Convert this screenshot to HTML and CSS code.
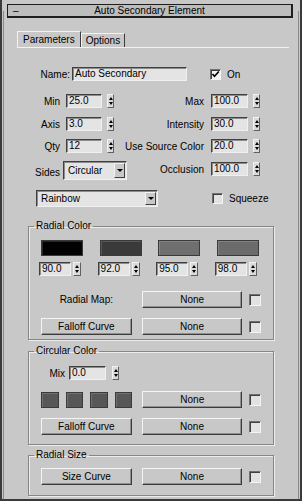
FILE: index.html
```html
<!DOCTYPE html>
<html>
<head>
    <link rel="stylesheet" href="styles.css">
</head>
<body>
    <div class="rollout">
        <div class="frame">
            <div class="title"><span class="collapse">&ndash;</span><span class="title-text">Auto Secondary Element</span><span></span></div>

            <div class="tabs">
                <div class="tab active">Parameters</div>
                <div class="tab">Options</div>
            </div>

            <div class="row name-row">
                <span class="name-label">Name:</span>
                <span class="field name-field">Auto Secondary</span>
                <span class="check on-check"><svg width="9" height="9" viewBox="0 0 9 9"><path d="M1.5 4 L3.5 6.3 L7.8 1.5" fill="none" stroke="#000" stroke-width="1.6"/></svg></span>
                <span class="check-label">On</span>
            </div>

            <div class="row pair min-row">
                <div class="grp-l"><span class="lbl-l">Min</span><span class="field num">25.0</span><span class="spin"></span></div>
                <div class="grp-r"><span class="lbl-r">Max</span><span class="field num wide">100.0</span><span class="spin"></span></div>
            </div>
            <div class="row pair axis-row">
                <div class="grp-l"><span class="lbl-l">Axis</span><span class="field num">3.0</span><span class="spin"></span></div>
                <div class="grp-r"><span class="lbl-r">Intensity</span><span class="field num wide">30.0</span><span class="spin"></span></div>
            </div>
            <div class="row pair qty-row">
                <div class="grp-l"><span class="lbl-l">Qty</span><span class="field num">12</span><span class="spin"></span></div>
                <div class="grp-r"><span class="lbl-r">Use Source Color</span><span class="field num wide">20.0</span><span class="spin"></span></div>
            </div>
            <div class="row pair sides-row">
                <div class="grp-l"><span class="lbl-l">Sides</span><span class="drop sides-drop"><span class="drop-text">Circular</span><span class="drop-btn"></span></span></div>
                <div class="grp-r"><span class="lbl-r">Occlusion</span><span class="field num wide">100.0</span><span class="spin"></span></div>
            </div>
            <div class="row rainbow-row">
                <span class="drop rainbow-drop"><span class="drop-text">Rainbow</span><span class="drop-btn"></span></span>
                <span class="check squeeze-check"></span>
                <span class="check-label">Squeeze</span>
            </div>

            <fieldset class="group radial-color">
                <legend>Radial Color</legend>
                <div class="group-body">
                    <div class="swatches4">
                        <span class="swatch" style="background:#020202"></span>
                        <span class="swatch" style="background:#3a3a3a"></span>
                        <span class="swatch" style="background:#6f6f6f"></span>
                        <span class="swatch" style="background:#6b6b6b"></span>
                    </div>
                    <div class="swatches4 spins4">
                        <span class="cell"><span class="field small">90.0</span><span class="spin"></span></span>
                        <span class="cell"><span class="field small">92.0</span><span class="spin"></span></span>
                        <span class="cell"><span class="field small">95.0</span><span class="spin"></span></span>
                        <span class="cell"><span class="field small">98.0</span><span class="spin"></span></span>
                    </div>
                    <div class="row map-row">
                        <span class="map-label">Radial Map:</span>
                        <span class="btn none-btn">None</span>
                        <span class="check map-check"></span>
                    </div>
                    <div class="row curve-row">
                        <span class="btn curve-btn">Falloff Curve</span>
                        <span class="btn none-btn">None</span>
                        <span class="check map-check"></span>
                    </div>
                </div>
            </fieldset>

            <fieldset class="group circular-color">
                <legend>Circular Color</legend>
                <div class="group-body">
                    <div class="row mix-row">
                        <span class="mix-label">Mix</span>
                        <span class="field num wide">0.0</span>
                        <span class="spin"></span>
                    </div>
                    <div class="row circ-row">
                        <span class="swatch mini"></span>
                        <span class="swatch mini"></span>
                        <span class="swatch mini"></span>
                        <span class="swatch mini"></span>
                        <span class="btn none-btn">None</span>
                        <span class="check map-check"></span>
                    </div>
                    <div class="row curve-row">
                        <span class="btn curve-btn">Falloff Curve</span>
                        <span class="btn none-btn">None</span>
                        <span class="check map-check"></span>
                    </div>
                </div>
            </fieldset>

            <fieldset class="group radial-size">
                <legend>Radial Size</legend>
                <div class="group-body">
                    <div class="row size-row">
                        <span class="btn curve-btn">Size Curve</span>
                        <span class="btn none-btn">None</span>
                        <span class="check map-check"></span>
                    </div>
                </div>
            </fieldset>
        </div>
    </div>
</body>
</html>
```

FILE: styles.css
```css
* { box-sizing: border-box; }
body { margin: 0; background-color: #c8c8c8; color: #000; font-family: "Liberation Sans", Arial, sans-serif; font-size: 10px; }

.rollout { height: 501px; display: flex; flex-direction: column; padding-top: 11px; border-left: 2px solid #3a3a3a; border-right: 2px solid #3a3a3a; border-bottom: 2px solid #3a3a3a; }
.frame { flex: 1; margin: 0 1px; border-left: 1px solid #8a8a8a; border-right: 1px solid #8a8a8a; }

.title { display: grid; grid-template-columns: 20px 1fr 20px; align-items: center; height: 14px; margin: -7px 5px 0 3px; background-color: #bdbdbd; border: 1px solid #1e1e1e; border-right-width: 2px; border-bottom-width: 2px; line-height: 11px; }
.collapse { padding-left: 5px; }
.title-text { text-align: center; }

.tabs { display: flex; align-items: flex-end; height: 17px; margin: 13px 9px 0 13px; border-bottom: 1px solid #f2f2f2; }
.tab { height: 14px; padding: 0 4px; line-height: 13px; border-top: 1px solid #f2f2f2; border-left: 1px solid #f2f2f2; border-right: 1px solid #3c3c3c; }
.tab.active { height: 16px; padding: 0 5px; line-height: 15px; }

.row { display: flex; align-items: center; }

.field { display: inline-block; height: 14px; padding-left: 2px; line-height: 12px; background-color: #e4e4e4; border: 1px solid; border-color: #404040 #f0f0f0 #f0f0f0 #404040; box-shadow: inset 1px 1px 0 #8c8c8c; white-space: nowrap; overflow: hidden; }

.check { display: inline-flex; align-items: center; justify-content: center; width: 11px; height: 11px; background-color: #e2e2e2; border: 1px solid; border-color: #707070 #f4f4f4 #f4f4f4 #707070; box-shadow: inset 1px 1px 0 #404040; }
.on-check { background-color: #f4f4f4; }
.check-label { margin-left: 6px; }

/* spinner: two small arrows */
.spin { display: inline-flex; flex-direction: column; justify-content: center; align-items: center; gap: 2px; width: 7px; height: 14px; margin-left: 5px; background-color: #dadada; border: 1px solid; border-color: #f2f2f2 #606060 #606060 #f2f2f2; }
.spin::before { content: ""; border-left: 2.5px solid transparent; border-right: 2.5px solid transparent; border-bottom: 3px solid #000; }
.spin::after { content: ""; border-left: 2.5px solid transparent; border-right: 2.5px solid transparent; border-top: 3px solid #000; }

.name-row { height: 14px; margin-top: 19px; }
.name-label { width: 66px; margin-right: 2px; text-align: right; }
.name-field { width: 115px; }
.on-check { margin-left: 23px; }

.pair { height: 14px; }
.grp-l { display: flex; align-items: center; }
.grp-r { display: flex; align-items: center; margin-left: auto; margin-right: 38px; }
.lbl-l { width: 56px; margin-right: 6px; text-align: right; }
.lbl-r { margin-right: 7px; text-align: right; }
.num { width: 36px; }
.num.wide { width: 37px; }

.min-row { margin-top: 13px; }
.axis-row { margin-top: 9px; }
.qty-row { margin-top: 8px; }
.sides-row { height: 19px; margin-top: 8px; align-items: flex-start; }
.sides-row .grp-r { margin-top: 1px; }
.sides-row .lbl-l { margin-top: 3px; }

.drop { display: flex; align-items: center; height: 19px; padding: 1px; background-color: #e4e4e4; border: 1px solid; border-color: #404040 #f0f0f0 #f0f0f0 #404040; box-shadow: inset 1px 1px 0 #8c8c8c; }
.drop-text { flex: 1; padding-left: 3px; }
.drop-btn { display: flex; align-items: center; justify-content: center; width: 11px; height: 15px; background-color: #c8c8c8; border: 1px solid; border-color: #f2f2f2 #404040 #404040 #f2f2f2; }
.drop-btn::after { content: ""; border-left: 3px solid transparent; border-right: 3px solid transparent; border-top: 3px solid #000; }
.sides-drop { width: 64px; margin-left: -3px; }

.rainbow-row { height: 17px; margin-top: 10px; }
.rainbow-drop { width: 122px; height: 17px; margin-left: 32px; }
.rainbow-drop .drop-btn { height: 13px; }
.squeeze-check { margin-left: 54px; }

.group { margin: 0 24px; padding: 0; min-width: 0; border: 1px solid #868686; box-shadow: inset 1px 1px 0 #ececec, 1px 1px 0 #ececec; }
.group legend { margin-left: 5px; padding: 0 2px; line-height: 12px; }
.group-body { padding: 0 12px; }

.radial-color { margin-top: 13px; }
.radial-color .group-body { padding-bottom: 4px; }
.circular-color { margin-top: 5px; }
.circular-color .group-body { padding-bottom: 9px; }
.radial-size { margin-top: 4px; }
.radial-size .group-body { padding-bottom: 10px; }

.swatches4 { display: grid; grid-template-columns: repeat(4, 42px); column-gap: 16.6px; margin-top: 8px; }
.swatch { display: block; height: 16px; border: 1px solid #3a3a3a; box-shadow: inset 1px 1px 0 rgba(255,255,255,0.15); }
.spins4 { margin-top: 6px; }
.cell { display: flex; align-items: center; margin-left: -2px; }
.field.small { width: 32px; }
.cell .spin { width: 8px; margin-left: 2px; }

.btn { display: inline-block; height: 17px; line-height: 15px; text-align: center; background-color: #c8c8c8; border: 1px solid; border-color: #f4f4f4 #3c3c3c #3c3c3c #f4f4f4; box-shadow: inset -1px -1px 0 #909090; }
.curve-btn { width: 93px; }
.none-btn { width: 103px; margin-left: 10px; }
.map-check { width: 12px; height: 12px; margin-left: 7px; }

.map-row { height: 17px; margin-top: 15px; }
.map-label { width: 93px; padding-right: 19px; text-align: right; }
.curve-row { height: 17px; margin-top: 10px; }

.mix-row { height: 14px; margin-top: 9px; }
.mix-label { width: 24px; margin-right: 4px; text-align: right; }
.mix-row .spin { margin-left: 6px; }

.circ-row { height: 17px; margin-top: 11px; }
.swatch.mini { width: 18px; margin-right: 7px; background-color: #575757; }
.swatch.mini:nth-child(4) { margin-right: 0; }
.circ-row .none-btn { margin-left: 10px; }

.size-row { height: 17px; margin-top: 7px; }
```
